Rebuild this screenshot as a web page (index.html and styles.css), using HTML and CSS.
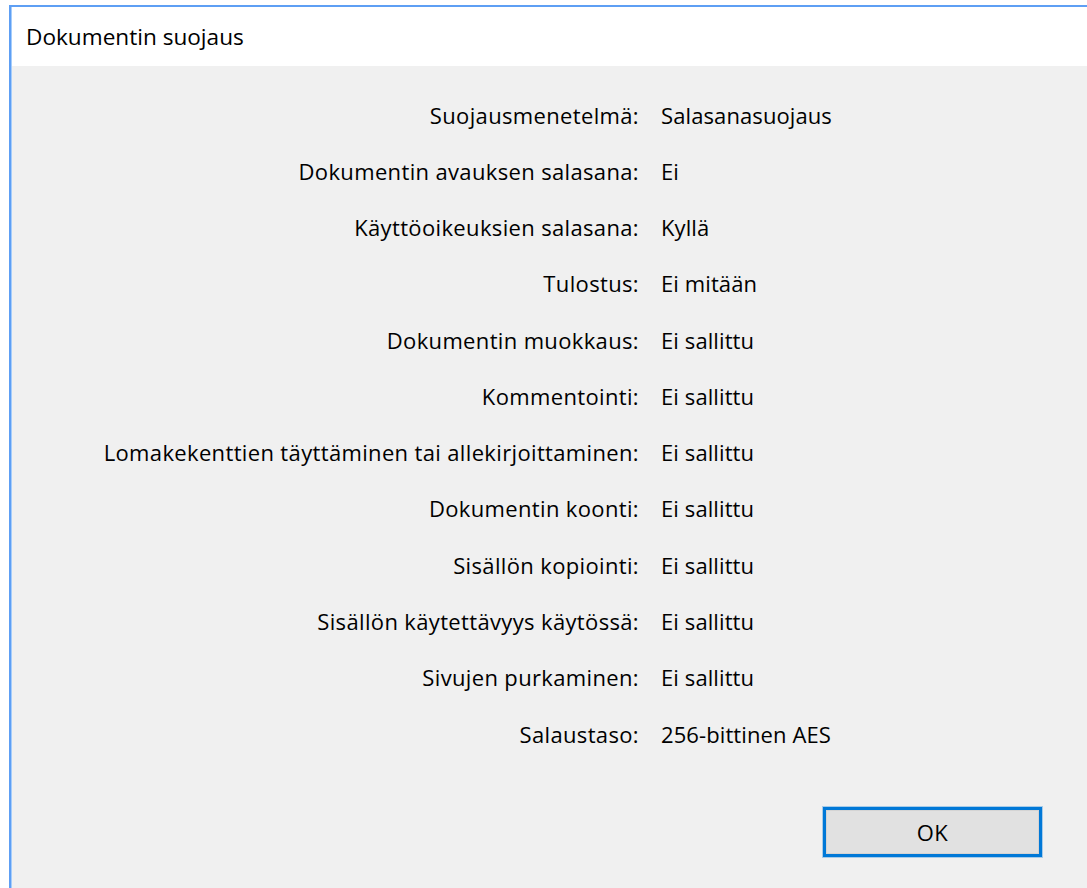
FILE: index.html
```html
<!DOCTYPE html>
<html lang="fi">
<head>
<meta charset="utf-8">
<title>Dokumentin suojaus</title>
<link rel="stylesheet" href="styles.css">
</head>
<body>
<div class="window">
  <div class="titlebar">
    <span class="title">Dokumentin suojaus</span>
  </div>
  <div class="content">
    <dl class="props">
      <dt>Suojausmenetelmä:</dt><dd>Salasanasuojaus</dd>
      <dt>Dokumentin avauksen salasana:</dt><dd>Ei</dd>
      <dt>Käyttöoikeuksien salasana:</dt><dd>Kyllä</dd>
      <dt>Tulostus:</dt><dd>Ei mitään</dd>
      <dt>Dokumentin muokkaus:</dt><dd>Ei sallittu</dd>
      <dt>Kommentointi:</dt><dd>Ei sallittu</dd>
      <dt>Lomakekenttien täyttäminen tai allekirjoittaminen:</dt><dd>Ei sallittu</dd>
      <dt>Dokumentin koonti:</dt><dd>Ei sallittu</dd>
      <dt>Sisällön kopiointi:</dt><dd>Ei sallittu</dd>
      <dt>Sisällön käytettävyys käytössä:</dt><dd>Ei sallittu</dd>
      <dt>Sivujen purkaminen:</dt><dd>Ei sallittu</dd>
      <dt>Salaustaso:</dt><dd>256-bittinen AES</dd>
    </dl>
    <div class="actions">
      <button class="btn-ok" type="button">OK</button>
    </div>
  </div>
</div>
</body>
</html>
```
FILE: styles.css
```css
html, body {
  margin: 0;
  padding: 0;
  height: 100%;
  background: #ffffff;
  overflow: hidden;
}

body {
  font-family: "Open Sans", "Noto Sans", sans-serif;
  color: #000000;
}

/* dialog frame with the blue accent edge on the top and left */
.window {
  margin: 5px 0 0 9px;
  height: calc(100% - 5px);
  border-top: 2px solid #5e9ff4;
  border-left: 2px solid #5e9ff4;
  box-shadow: inset 1px 1px 0 #a6cdfb;
  background: #f0f0f0;
  box-sizing: border-box;
}

.titlebar {
  height: 59px;
  background: #ffffff;
  display: flex;
  align-items: center;
  padding-left: 14px;
  margin-left: 1px;
}

.title {
  font-size: 22.6px;
}

.content {
  padding-top: 20.6px;
  font-size: 22px;
  letter-spacing: 0.35px;
}

/* two-column property list: right-aligned labels, left-aligned values */
.props {
  margin: 0;
  display: grid;
  grid-template-columns: 628px auto;
  column-gap: 22px;
  grid-auto-rows: 56.27px;
  line-height: 56.27px;
}

.props dt {
  text-align: right;
  white-space: nowrap;
}

.props dd {
  margin: 0;
  white-space: nowrap;
  letter-spacing: 0.1px;
}

.actions {
  display: flex;
  justify-content: flex-end;
  padding-right: 45px;
  margin-top: 45.2px;
}

.btn-ok {
  width: 219px;
  height: 50px;
  box-sizing: border-box;
  border: 3px solid #0078d7;
  box-shadow: 0 0 0 1px rgba(0, 120, 215, 0.3), inset 0 0 0 1px #d4d4d4;
  background: #e1e1e1;
  font-family: inherit;
  font-size: 22px;
  letter-spacing: 0.35px;
  color: #000000;
  padding: 0;
}
```
